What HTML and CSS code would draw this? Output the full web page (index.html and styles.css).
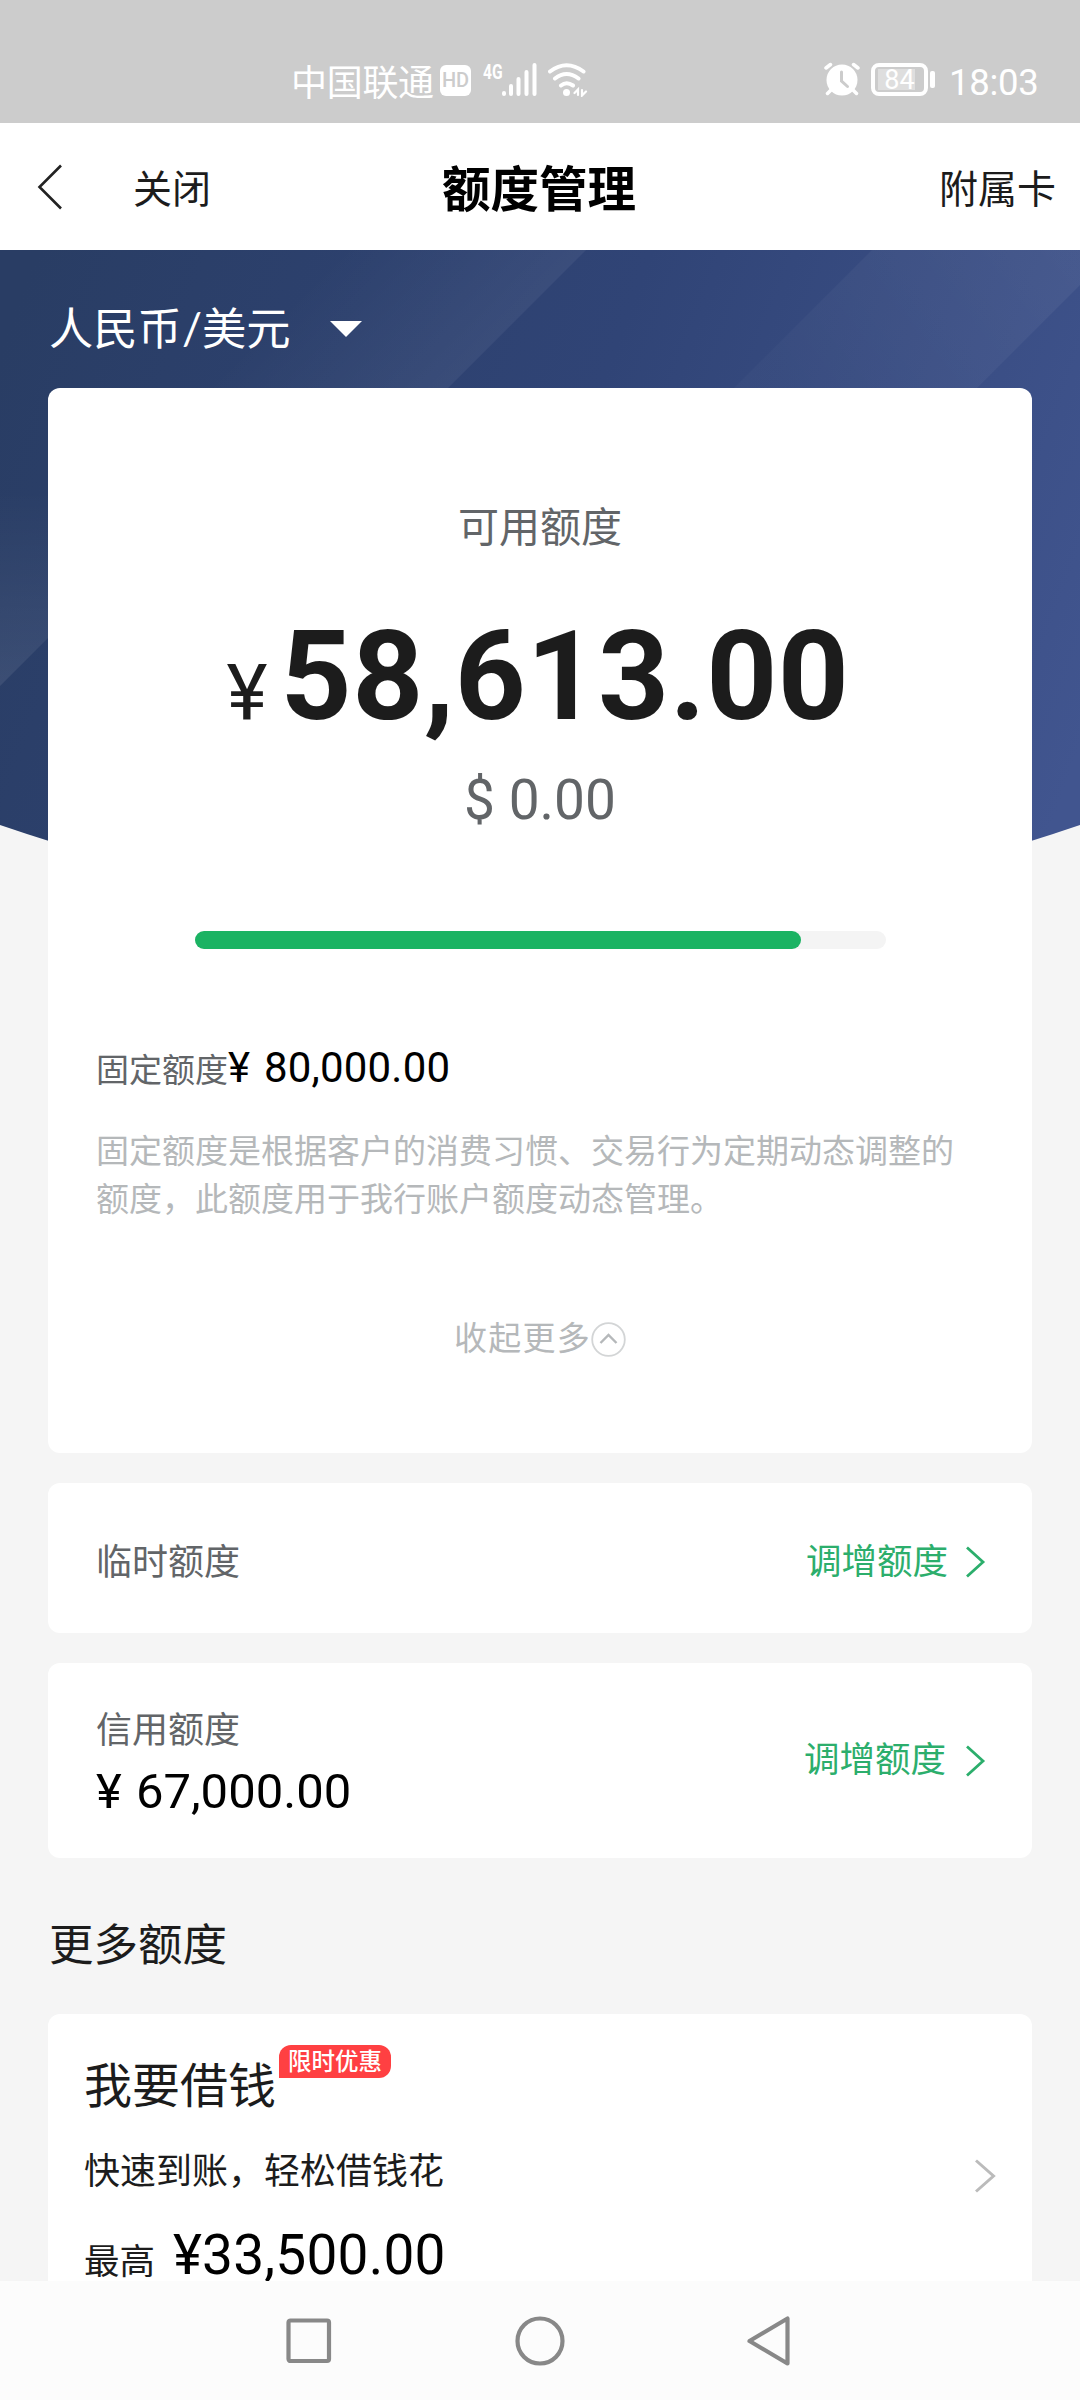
FILE: index.html
```html
<!DOCTYPE html>
<html lang="zh-CN">
<head>
<meta charset="utf-8">
<title>额度管理</title>
<link rel="stylesheet" href="styles.css">
</head>
<body>
<div class="screen">
  <div class="status">
    <div class="status-left">
      <span class="carrier">中国联通</span>
      <span class="hd">HD</span>
      <span class="net">4G</span>
      <svg class="signal" width="35" height="33" viewBox="0 0 35 33" fill="none" stroke="#fff" stroke-width="4" stroke-linecap="round"><path d="M2 30v1M9 23v8M16.500 16v15M24.500 9v22M32.500 2v29"/></svg>
      <svg class="wifi" width="40" height="34" viewBox="0 0 40 34" fill="none" stroke="#fff" stroke-width="4" stroke-linecap="round"><path d="M2 8.500Q18.500-4 35.500 8.500M7 15.500Q18.500 6.500 30.500 15.500M13 22.500Q18.500 18 25 22.500"/><circle cx="18.500" cy="29.500" r="3.500" fill="#fff" stroke="none"/><path d="M26.500 30L30 26.500V32M34 27v5.500L38 28.500" stroke-width="2.200"/></svg>
    </div>
    <div class="status-right">
      <svg width="36" height="34" viewBox="0 0 36 34" fill="none" stroke="#fff" stroke-width="3.500" stroke-linecap="round"><circle cx="18" cy="18" r="15.500" fill="#fff" stroke="none"/><path d="M2 6L6.500 2.500M34 6L29.500 2.500M7 28L3.500 31.500M29 28L32.500 31.500"/><path d="M17.500 10v9L23.500 24.500" stroke="#ccc" stroke-width="3"/></svg>
      <div class="battery"><span>84</span></div>
      <span class="time">18:03</span>
    </div>
  </div>

  <header class="header">
    <svg class="back" width="26" height="46" viewBox="0 0 26 46" fill="none" stroke="#222" stroke-width="2.600"><path d="M24 1.500L2.500 23L24 44.500"/></svg>
    <span class="close">关闭</span>
    <h1>额度管理</h1>
    <span class="extra">附属卡</span>
  </header>

  <main class="main">
    <svg class="backdrop" width="1080" height="592" viewBox="0 0 1080 592">
      <defs>
        <linearGradient id="base" gradientUnits="userSpaceOnUse" x1="0" y1="100" x2="1080" y2="500"><stop offset="0" stop-color="#293d64"/><stop offset=".5" stop-color="#304476"/><stop offset="1" stop-color="#41558f"/></linearGradient>
        <linearGradient id="f1" gradientUnits="userSpaceOnUse" x1="340" y1="0" x2="463" y2="123"><stop offset="0" stop-color="#fff" stop-opacity="0"/><stop offset="1" stop-color="#fff" stop-opacity=".055"/></linearGradient>
        <linearGradient id="f2" gradientUnits="userSpaceOnUse" x1="1040" y1="-20" x2="800" y2="150"><stop offset="0" stop-color="#fff" stop-opacity=".055"/><stop offset="1" stop-color="#fff" stop-opacity=".02"/></linearGradient>
        <linearGradient id="f3" gradientUnits="userSpaceOnUse" x1="0" y1="240" x2="0" y2="430"><stop offset="0" stop-color="#fff" stop-opacity="0"/><stop offset="1" stop-color="#fff" stop-opacity=".08"/></linearGradient>
      </defs>
      <path d="M0 0H1080V575Q540 760 0 575Z" fill="url(#base)"/>
      <path d="M340 0H586L400 186H154Z" fill="url(#f1)"/>
      <path d="M872 0H1080V35L930 185H687Z" fill="url(#f2)"/>
      <path d="M0 240H48V388L0 436Z" fill="url(#f3)"/>
    </svg>

    <div class="currency"><span>人民币/美元</span><i class="caret"></i></div>

    <section class="card quota">
      <div class="label">可用额度</div>
      <div class="amount"><span class="yen">¥</span><span class="sum">58,613.00</span></div>
      <div class="usd">$ 0.00</div>
      <div class="track"><div class="fill"></div></div>
      <div class="fixed"><span class="fixed-label">固定额度</span><span class="fixed-sum">¥ 80,000.00</span></div>
      <p class="note">固定额度是根据客户的消费习惯、交易行为定期动态调整的额度，此额度用于我行账户额度动态管理。</p>
      <div class="collapse"><span>收起更多</span><svg width="35" height="35" viewBox="0 0 35 35" fill="none"><circle cx="17.500" cy="17.500" r="16.300" stroke="#d3d5d6" stroke-width="1.800"/><path d="M9.500 21L17.500 13L25.500 21" stroke="#b5b8ba" stroke-width="2.400"/></svg></div>
    </section>

    <section class="card row temp">
      <span class="name">临时额度</span>
      <span class="raise">调增额度<svg width="21" height="32" viewBox="0 0 21 32" fill="none" stroke="#2cae6c" stroke-width="2.800"><path d="M2 1.500L18 16L2 30.500"/></svg></span>
    </section>

    <section class="card row credit">
      <div class="stack"><span class="name">信用额度</span><span class="credit-sum">¥ 67,000.00</span></div>
      <span class="raise">调增额度<svg width="21" height="32" viewBox="0 0 21 32" fill="none" stroke="#2cae6c" stroke-width="2.800"><path d="M2 1.500L18 16L2 30.500"/></svg></span>
    </section>

    <h2>更多额度</h2>

    <section class="card loan">
      <div class="loan-text">
        <div class="loan-title"><span>我要借钱</span><b class="badge">限时优惠</b></div>
        <div class="loan-desc">快速到账，轻松借钱花</div>
        <div class="loan-max"><span>最高</span><span class="loan-sum">¥33,500.00</span></div>
      </div>
      <svg class="loan-arrow" width="22" height="34" viewBox="0 0 22 34" fill="none" stroke="#bbb" stroke-width="3"><path d="M2 1.500L19.500 17L2 32.500"/></svg>
    </section>
  </main>

  <nav class="nav">
    <svg width="50" height="54" viewBox="0 0 50 54" fill="none" stroke="#888" stroke-width="4.200"><rect x="4.500" y="6.500" width="40.500" height="40.500" rx="2"/></svg>
    <svg width="50" height="54" viewBox="0 0 50 54" fill="none" stroke="#888" stroke-width="4.200"><circle cx="25" cy="27" r="22.500"/></svg>
    <svg width="50" height="54" viewBox="0 0 50 54" fill="none" stroke="#888" stroke-width="4.200" stroke-linejoin="round"><path d="M41.500 4.500V49.500L3.500 27Z"/></svg>
  </nav>
</div>
</body>
</html>
```
FILE: styles.css
```css
* { box-sizing: border-box; }
body { margin: 0; font-family: Lato, "Noto Sans CJK SC", sans-serif; color: #1c1c1c; }
h1, h2, p { margin: 0; font-weight: 400; }
svg { display: block; flex: none; }
span { white-space: nowrap; }
.yen, .sum, .usd, .fixed-sum, .credit-sum, .loan-sum, .battery, .time { font-family: Roboto, "Noto Sans CJK SC", sans-serif; }
.screen { width: 1080px; height: 2400px; overflow: hidden; display: flex; flex-direction: column; background: #f5f5f5; }

.status { height: 123px; flex: none; background: #ccc; color: #fff; display: flex; justify-content: space-between; padding: 62px 42px 0 291px; }
.status-left, .status-right { display: flex; align-items: flex-start; height: 36px; }
.carrier { font-size: 36px; line-height: 40px; width: 149px; letter-spacing: -.3px; }
.hd { width: 31px; height: 31px; margin-top: 3px; border-radius: 6px; background: #fff; color: #ccc; font: 500 20px/31px Roboto, sans-serif; text-align: center; }
.net { font: 700 20px/20px Roboto, sans-serif; margin-left: 12px; width: 19px; transform: scaleX(.78); transform-origin: left; }
.signal { margin: 1px 0 0; }
.wifi { margin: 1px 0 0 11px; }
.battery { width: 57px; height: 33px; margin: 1px 21px 0 11px; border: 4px solid #fff; border-radius: 8px; position: relative; display: flex; justify-content: center; align-items: center; font-size: 27px; line-height: 26px; background: linear-gradient(#dedede, #dedede) 3px 2px / 37px 21px no-repeat; }
.battery::after { content: ""; position: absolute; left: 55px; top: 4px; width: 5px; height: 17px; border-radius: 2px; background: #fff; }
.time { font-size: 36.500px; line-height: 42px; width: 89px; letter-spacing: -.3px; }

.header { height: 127px; flex: none; background: #fff; display: flex; align-items: center; padding: 2px 24px 0 37px; line-height: 60px; font-size: 39px; }
.close { margin-left: 70px; width: 309px; }
h1 { font-size: 48.500px; font-weight: 700; color: #000; flex: 1; }
.back { margin-top: -2px; }

.main { flex: 1; min-height: 0; overflow: hidden; position: relative; padding: 0 48px; }
.backdrop { position: absolute; left: 0; top: 0; }
.currency { position: relative; height: 138px; padding: 50px 0 0 1px; display: flex; color: #fff; font-size: 44.300px; line-height: 56px; }
.caret { border: solid transparent; border-width: 16px 16.500px 0; border-top-color: #fff; height: 0; margin: 21px 0 0 39px; }

.card { position: relative; background: #fff; border-radius: 12px; }
.quota { height: 1065px; padding: 109px 48px 0; display: flex; flex-direction: column; align-items: center; }
.label { font-size: 41px; line-height: 60px; color: #626568; }
.amount { height: 120px; margin: 60px 4px 0 0; display: flex; align-items: baseline; line-height: 120px; }
.yen { font-size: 78px; margin-right: 13px; }
.sum { font-size: 124px; font-weight: 700; letter-spacing: .5px; }
.usd { margin-top: 33px; font-size: 55px; line-height: 60px; color: #626568; }
.track { width: 691px; height: 18px; margin-top: 101px; background: #f4f4f4; border-radius: 9px; }
.fill { width: 606px; height: 18px; border-radius: 9px; background: #1bb363; }
.fixed { align-self: stretch; height: 50px; margin-top: 94px; display: flex; align-items: baseline; line-height: 50px; }
.fixed-label { font-size: 33px; color: #626568; }
.fixed-sum { font-size: 42px; color: #000; letter-spacing: .2px; word-spacing: 3px; }
.note { align-self: stretch; margin-top: 33px; font-size: 33px; line-height: 48px; color: #b5b8ba; }
.collapse { margin-top: 90px; height: 50px; display: flex; align-items: center; font-size: 33px; line-height: 50px; letter-spacing: 1.200px; color: #b5b8ba; }
.collapse svg { margin-top: 5px; }

.row { margin-top: 30px; padding: 0 46px 0 48px; display: flex; align-items: center; justify-content: space-between; }
.temp { height: 150px; padding-top: 5px; }
.credit { height: 195px; }
.credit .raise { padding: 0 0 3px; gap: 19px; }
.name { font-size: 36px; line-height: 50px; color: #626568; }
.stack { display: flex; flex-direction: column; padding-top: 5px; }
.credit-sum { font-size: 49px; line-height: 60px; color: #000; margin-top: 8px; word-spacing: 2px; }
.raise { display: flex; align-items: center; gap: 17px; font-size: 35.500px; line-height: 50px; color: #2cae6c; }
.raise svg { margin-top: 3px; }

h2 { margin: 56px 0 0 1px; font-size: 44.500px; line-height: 60px; }
.loan { margin-top: 40px; height: 300px; padding: 0 36px; display: flex; justify-content: space-between; }
.loan-title { display: flex; height: 60px; margin-top: 41px; font-size: 48px; line-height: 60px; }
.badge { width: 112px; height: 33px; margin: -10px 0 0 3px; border-radius: 12px 12px 12px 0; background: #ff4042; color: #fff; font-size: 23.500px; font-weight: 500; line-height: 33px; text-align: center; }
.loan-desc { margin-top: 30px; font-size: 36px; line-height: 50px; }
.loan-max { margin-top: 37px; display: flex; align-items: baseline; font-size: 35.500px; line-height: 46px; }
.loan-sum { margin-left: 18px; font-size: 55px; letter-spacing: .2px; color: #000; }
.loan-arrow { margin-top: 145px; }

.nav { height: 119px; flex: none; background: #fcfcfc; display: flex; justify-content: center; gap: 181px; padding-top: 33px; }
```
